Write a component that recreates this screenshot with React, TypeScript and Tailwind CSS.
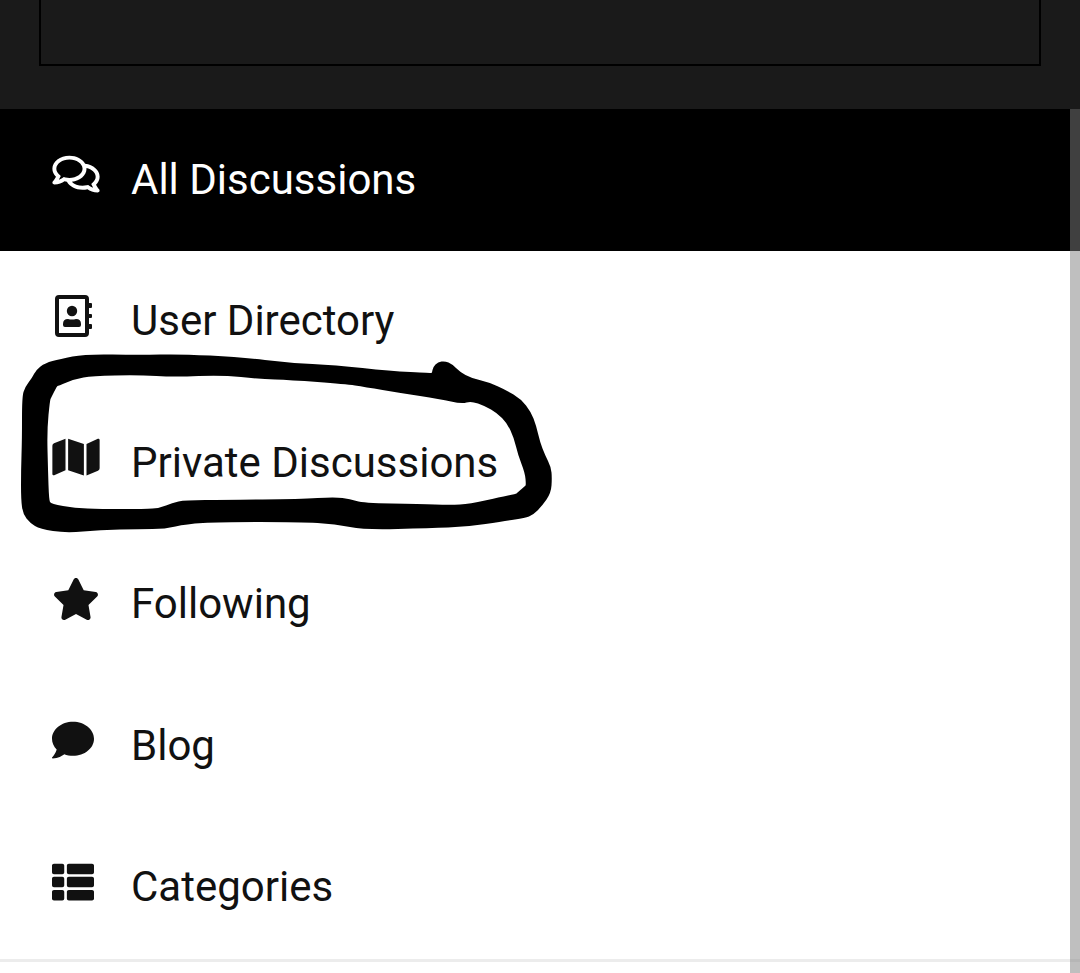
import React from 'react';
import { FaComment, FaMap, FaRegComments, FaStar, FaThList } from 'react-icons/fa';
import clsx from 'clsx';

type Point = [number, number];

interface NavItem {
  label: string;
  icon: React.ReactNode;
  active?: boolean;
}

const AddressBookIcon: React.FC = () => (
  <svg viewBox="0 0 42 42" className="h-[42px] w-[42px]" fill="currentColor" aria-hidden="true">
    <path
      fillRule="evenodd"
      d="M7 0H33Q37 0 37 4V8H39Q40 8 40 9V12Q40 13 39 13H37V19H39Q40 19 40 20V22Q40 23 39 23H37V29H39Q40 29 40 30V33Q40 34 39 34H37V38Q37 42 33 42H7Q3 42 3 38V4Q3 0 7 0ZM7 4V38H33V4Z"
    />
    <circle cx="20" cy="16" r="5.2" />
    <path d="M11 29Q11 24 16 24Q20 25 24 24Q29 24 29 29V30Q29 32 27 32H13Q11 32 11 30Z" />
  </svg>
);

const items: NavItem[] = [
  { label: 'All Discussions', icon: <FaRegComments className="h-[42px] w-[48px]" />, active: true },
  { label: 'User Directory', icon: <AddressBookIcon /> },
  { label: 'Private Discussions', icon: <FaMap className="h-[42px] w-[48px]" /> },
  { label: 'Following', icon: <FaStar className="h-[42px] w-[48px]" /> },
  { label: 'Blog', icon: <FaComment /> },
  { label: 'Categories', icon: <FaThList /> },
];

// Outer and inner edges of the marker stroke
const outerEdge: Point[] = [
  [22, 397], [25, 387], [32, 378], [36, 370], [45, 363], [60, 359], [85, 354], [140, 355], [180, 354],
  [240, 357], [290, 363], [335, 365], [390, 371], [431, 373], [432, 373], [433, 367], [438, 362], [445, 361],
  [452, 364], [460, 372], [471, 378], [488, 382], [506, 390], [521, 399], [531, 412], [536, 425],
  [540, 442], [545, 455], [551, 467], [552, 478], [551, 493], [542, 506], [533, 515], [525, 518],
  [505, 521], [466, 527], [430, 528], [365, 530], [335, 524], [300, 522], [220, 522], [186, 524],
  [165, 529], [140, 529], [100, 530], [66, 533], [40, 529], [30, 523], [23, 514], [21, 500], [21, 470], [22, 440],
];

const innerEdge: Point[] = [
  [57, 386], [58, 386], [75, 379], [92, 376], [138, 375], [175, 377], [222, 375], [260, 379],
  [290, 380], [345, 384], [365, 387], [400, 393], [440, 399], [462, 404], [471, 401], [485, 406],
  [497, 413], [507, 423], [514, 438], [518, 455], [525, 473], [526, 485], [525, 486], [517, 493], [516, 494],
  [500, 497], [470, 504], [450, 505], [420, 504], [363, 503], [350, 499], [335, 497], [300, 499], [225, 500],
  [185, 500], [172, 503], [160, 508], [145, 509], [100, 509], [75, 508], [51, 504], [49, 500],
  [48, 470], [47, 430], [50, 400], [51, 398],
];

// Closed curve running through the midpoint of every segment
const smooth = (points: Point[]) => {
  const mid = (a: Point, b: Point) => `${(a[0] + b[0]) / 2} ${(a[1] + b[1]) / 2}`;
  const last = points[points.length - 1];
  const curves = points.map((p, i) => `Q${p[0]} ${p[1]} ${mid(p, points[(i + 1) % points.length])}`);
  return `M${mid(last, points[0])}${curves.join('')}Z`;
};

const MarkerCircle: React.FC = () => (
  <svg
    viewBox="21 354 532 179"
    className="pointer-events-none absolute left-[21px] top-[245px] h-[179px] w-[532px] overflow-visible"
    aria-hidden="true"
  >
    <path d={smooth(outerEdge) + smooth(innerEdge)} fillRule="evenodd" fill="#000" />
  </svg>
);

const App: React.FC = () => {
  return (
    <div className="min-h-screen bg-white font-[Roboto,sans-serif] text-[42px] leading-[48px] text-[#111111]">
      <header className="bg-[#1a1a1a] px-[39px] pb-[43px]">
        <div className="h-[66px] border-x-2 border-b-2 border-black" />
      </header>

      <div className="relative">
        <nav aria-label="Discussions">
          <ul className="grid min-h-[849px] auto-rows-fr">
            {items.map((item) => (
              <li key={item.label}>
                <a
                  href="#"
                  aria-current={item.active ? 'page' : undefined}
                  className={clsx('flex h-full items-center pl-[52px]', item.active && 'bg-black text-white')}
                >
                  <span className="w-[79px] shrink-0 pb-[11px]">{item.icon}</span>
                  <span>{item.label}</span>
                </a>
              </li>
            ))}
          </ul>
        </nav>
        <hr className="mt-px border-t-[3px] border-[#ececec]" />
        <div className="h-[11px]" />

        <MarkerCircle />

        {/* Scrollbar thumb */}
        <div className="absolute inset-y-0 right-0 w-[10px] bg-[#808080]/50" />
      </div>
    </div>
  );
};

export default App;
